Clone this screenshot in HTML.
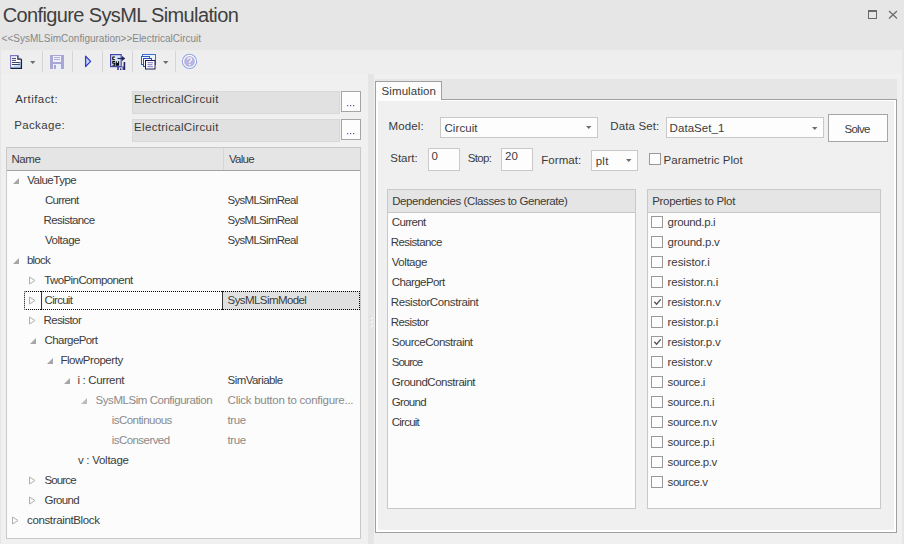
<!DOCTYPE html>
<html><head><meta charset="utf-8">
<style>
html,body{margin:0;padding:0;}
body{width:904px;height:544px;position:relative;overflow:hidden;background:#e6e6e6;font-family:"Liberation Sans",sans-serif;}
.a{position:absolute;white-space:pre;line-height:1;}
</style></head><body>
<div style="position:absolute;left:0px;top:0px;width:904px;height:544px;background:#e6e6e6"></div>
<div style="position:absolute;left:1px;top:50px;width:901px;height:24px;background:#eeeeee"></div>
<div style="position:absolute;left:1px;top:74px;width:901px;height:470px;background:#f0f0f0"></div>
<div style="position:absolute;left:42px;top:51px;width:1px;height:21px;background:#d5d5d5"></div>
<div style="position:absolute;left:72px;top:51px;width:1px;height:21px;background:#d5d5d5"></div>
<div style="position:absolute;left:102px;top:51px;width:1px;height:21px;background:#d5d5d5"></div>
<div style="position:absolute;left:132px;top:51px;width:1px;height:21px;background:#d5d5d5"></div>
<div style="position:absolute;left:175px;top:51px;width:1px;height:21px;background:#d5d5d5"></div>
<div style="position:absolute;left:132px;top:91px;width:208px;height:23px;background:#e1e1e1;border:1px solid #d9d9d9;box-sizing:border-box"></div>
<div style="position:absolute;left:132px;top:119px;width:208px;height:23px;background:#e1e1e1;border:1px solid #d9d9d9;box-sizing:border-box"></div>
<div style="position:absolute;left:341px;top:91px;width:20px;height:21px;background:#fdfdfd;border:1px solid #a5a5a5;box-sizing:border-box"></div>
<div style="position:absolute;left:341px;top:119px;width:20px;height:21px;background:#fdfdfd;border:1px solid #a5a5a5;box-sizing:border-box"></div>
<div style="position:absolute;left:6px;top:147px;width:355px;height:392px;background:#fcfcfc;border:1px solid #c9c9c9;box-sizing:border-box"></div>
<div style="position:absolute;left:7px;top:148px;width:353px;height:22px;background:#e5e5e5"></div>
<div style="position:absolute;left:7px;top:170px;width:353px;height:1px;background:#a3a3a3"></div>
<div style="position:absolute;left:223px;top:148px;width:1px;height:22px;background:#d6d6d6"></div>
<div style="position:absolute;left:368px;top:74px;width:6px;height:470px;background:#e5e5e5"></div>
<div style="position:absolute;left:375px;top:79px;width:522px;height:20px;background:#e6e6e6"></div>
<div style="position:absolute;left:375px;top:81px;width:67px;height:19px;background:#fcfcfc;border:1px solid #a0a0a0;border-bottom:none;box-sizing:border-box"></div>
<div style="position:absolute;left:375px;top:99px;width:522px;height:434px;background:#f0f0f0;border:1px solid #a0a0a0;box-sizing:border-box"></div>
<div style="position:absolute;left:376px;top:100px;width:520px;height:432px;border:2px solid #ffffff;border-top:1px solid #ffffff;box-sizing:border-box"></div>
<div style="position:absolute;left:376px;top:99px;width:65px;height:2px;background:#fcfcfc"></div>
<div style="position:absolute;left:440px;top:117px;width:158px;height:21px;background:#fdfdfd;border:1px solid #c9c9c9;box-sizing:border-box"></div>
<div style="position:absolute;left:666px;top:117px;width:158px;height:21px;background:#fdfdfd;border:1px solid #c9c9c9;box-sizing:border-box"></div>
<div style="position:absolute;left:828px;top:114px;width:60px;height:28px;background:#fdfdfd;border:1px solid #a5a5a5;box-sizing:border-box"></div>
<div style="position:absolute;left:428px;top:148px;width:32px;height:23px;background:#fdfdfd;border:1px solid #c9c9c9;box-sizing:border-box"></div>
<div style="position:absolute;left:501px;top:148px;width:32px;height:23px;background:#fdfdfd;border:1px solid #c9c9c9;box-sizing:border-box"></div>
<div style="position:absolute;left:591px;top:150px;width:47px;height:21px;background:#fdfdfd;border:1px solid #c9c9c9;box-sizing:border-box"></div>
<div style="position:absolute;left:649px;top:153px;width:12px;height:12px;background:#fdfdfd;border:1px solid #999999;box-sizing:border-box"></div>
<div style="position:absolute;left:387px;top:189px;width:249px;height:320px;background:#fcfcfc;border:1px solid #c9c9c9;box-sizing:border-box"></div>
<div style="position:absolute;left:388px;top:190px;width:247px;height:22px;background:#e5e5e5"></div>
<div style="position:absolute;left:388px;top:212px;width:247px;height:1px;background:#c6c6c6"></div>
<div style="position:absolute;left:647px;top:189px;width:234px;height:320px;background:#fcfcfc;border:1px solid #c9c9c9;box-sizing:border-box"></div>
<div style="position:absolute;left:648px;top:190px;width:232px;height:22px;background:#e5e5e5"></div>
<div style="position:absolute;left:648px;top:212px;width:232px;height:1px;background:#c6c6c6"></div>
<div style="position:absolute;left:651px;top:216px;width:12px;height:12px;background:#fdfdfd;border:1px solid #999999;box-sizing:border-box"></div>
<div style="position:absolute;left:651px;top:236px;width:12px;height:12px;background:#fdfdfd;border:1px solid #999999;box-sizing:border-box"></div>
<div style="position:absolute;left:651px;top:256px;width:12px;height:12px;background:#fdfdfd;border:1px solid #999999;box-sizing:border-box"></div>
<div style="position:absolute;left:651px;top:276px;width:12px;height:12px;background:#fdfdfd;border:1px solid #999999;box-sizing:border-box"></div>
<div style="position:absolute;left:651px;top:296px;width:12px;height:12px;background:#fdfdfd;border:1px solid #999999;box-sizing:border-box"></div>
<div style="position:absolute;left:651px;top:316px;width:12px;height:12px;background:#fdfdfd;border:1px solid #999999;box-sizing:border-box"></div>
<div style="position:absolute;left:651px;top:336px;width:12px;height:12px;background:#fdfdfd;border:1px solid #999999;box-sizing:border-box"></div>
<div style="position:absolute;left:651px;top:356px;width:12px;height:12px;background:#fdfdfd;border:1px solid #999999;box-sizing:border-box"></div>
<div style="position:absolute;left:651px;top:376px;width:12px;height:12px;background:#fdfdfd;border:1px solid #999999;box-sizing:border-box"></div>
<div style="position:absolute;left:651px;top:396px;width:12px;height:12px;background:#fdfdfd;border:1px solid #999999;box-sizing:border-box"></div>
<div style="position:absolute;left:651px;top:416px;width:12px;height:12px;background:#fdfdfd;border:1px solid #999999;box-sizing:border-box"></div>
<div style="position:absolute;left:651px;top:436px;width:12px;height:12px;background:#fdfdfd;border:1px solid #999999;box-sizing:border-box"></div>
<div style="position:absolute;left:651px;top:456px;width:12px;height:12px;background:#fdfdfd;border:1px solid #999999;box-sizing:border-box"></div>
<div style="position:absolute;left:651px;top:476px;width:12px;height:12px;background:#fdfdfd;border:1px solid #999999;box-sizing:border-box"></div>
<div style="position:absolute;left:41px;top:291px;width:182px;height:19px;background:#fcfcfc;border-top:1px dotted #000;border-bottom:1px dotted #000;border-left:1px solid #333;box-sizing:border-box;border-radius:2px 0 0 2px"></div>
<div style="position:absolute;left:24px;top:291px;width:18px;height:19px;border:1px dotted #000;border-right:none;box-sizing:border-box;border-radius:2px 0 0 2px"></div>
<div style="position:absolute;left:222px;top:291px;width:138px;height:19px;background:#e0e0e0;border-top:1px dotted #000;border-bottom:1px dotted #000;border-right:1px dotted #000;border-left:1px solid #333;box-sizing:border-box"></div>
<svg style="position:absolute;left:0;top:0" width="904" height="544"><polygon points="13,184 19,178 19,184" fill="#a6a6a6"/><polygon points="13,264 19,258 19,264" fill="#a6a6a6"/><polygon points="29.5,277 29.5,284 35.0,280.5" fill="none" stroke="#b0b0b0" stroke-width="1"/><polygon points="29.5,297 29.5,304 35.0,300.5" fill="none" stroke="#b0b0b0" stroke-width="1"/><polygon points="29.5,317 29.5,324 35.0,320.5" fill="none" stroke="#b0b0b0" stroke-width="1"/><polygon points="30,344 36,338 36,344" fill="#a6a6a6"/><polygon points="47,364 53,358 53,364" fill="#a6a6a6"/><polygon points="64,384 70,378 70,384" fill="#a6a6a6"/><polygon points="81,404 87,398 87,404" fill="#bcbcbc"/><polygon points="29.5,477 29.5,484 35.0,480.5" fill="none" stroke="#b0b0b0" stroke-width="1"/><polygon points="29.5,497 29.5,504 35.0,500.5" fill="none" stroke="#b0b0b0" stroke-width="1"/><polygon points="12.5,517 12.5,524 18.0,520.5" fill="none" stroke="#b0b0b0" stroke-width="1"/><rect x="868.5" y="10.5" width="8" height="8" fill="none" stroke="#6a6a6a" stroke-width="1"/><rect x="868" y="10" width="9" height="2" fill="#6a6a6a"/><path d="M889,11 L897,18.5 M897,11 L889,18.5" stroke="#6a6a6a" stroke-width="1.2"/><path d="M10.5,55.5 H17.8 L21.5,59.2 V68.5 H10.5 Z" fill="#ffffff"/><path d="M18,62 H21 V68 H11 V66.5 H14 V65.5 H18 Z" fill="#bcd8f4"/><path d="M10.6,68.5 V55.6 H17.8" fill="none" stroke="#7d72c4" stroke-width="1.1"/><path d="M17.8,55.6 L21.4,59.2" fill="none" stroke="#c8d4f0" stroke-width="1"/><path d="M21.4,59.2 V68.4 H10.6" fill="none" stroke="#1a1a42" stroke-width="1.3"/><path d="M17.9,55.8 V59 H21.2 Z" fill="#d6ecff"/><path d="M17.9,55.6 V59.1 H21.4" fill="none" stroke="#1a1a42" stroke-width="1.2"/><path d="M12,58.4 H16 M12,60.4 H16 M12,62.5 H19.8 M12,64.5 H19.8" stroke="#3e3e70" stroke-width="1"/><polygon points="30,61 35.5,61 32.75,64" fill="#6e6e6e"/><polygon points="163,61 168.5,61 165.75,64" fill="#6e6e6e"/><rect x="50" y="55" width="14" height="14" fill="#aaa7d6"/><rect x="53" y="56" width="8" height="6" fill="#f2f4fb"/><path d="M54,57.6 H60 M54,59.6 H60" stroke="#aaa7d6" stroke-width="1"/><rect x="53" y="64" width="8" height="5" fill="#e8f0fa"/><rect x="54" y="65" width="2" height="4" fill="#aaa7d6"/><polygon points="85.6,56.3 85.6,66.5 90.6,61.4" fill="#c5dcf5" stroke="#3a3ad0" stroke-width="1.3" stroke-linejoin="round"/><rect x="110.6" y="54.6" width="10.6" height="12" fill="#d2e6fa" stroke="#4646a6" stroke-width="1.2"/><rect x="112" y="56" width="4" height="5" fill="#f4f9ff"/><path d="M115.2,57 H112.8 V59.8 H115.2" fill="none" stroke="#000" stroke-width="1.1"/><path d="M115,61.5 H112.8 V63.3 H114.7 V65.3 H112.5 M116.3,61.2 V65.3 H118.6 V61.2 M117.45,63 V65.3" fill="none" stroke="#000" stroke-width="1.05"/><path d="M117.5,58.5 H123.2" stroke="#25255e" stroke-width="1.2"/><polygon points="122,56 125.3,58.5 122,61" fill="#25255e"/><rect x="117" y="66.5" width="7" height="3.5" fill="#5a5ab0"/><rect x="119" y="67.5" width="3.5" height="2.5" fill="#f2f2fa"/><rect x="120" y="68.5" width="1.4" height="1.5" fill="#25255e"/><rect x="123.6" y="62" width="1.6" height="8" fill="#25255e"/><rect x="142.5" y="54.5" width="13" height="10" fill="#eaf2fc" stroke="#3f6fd0" stroke-width="1"/><rect x="141.5" y="56.5" width="8" height="8" fill="#f4f8fe" stroke="#2c5cc8" stroke-width="1"/><rect x="143.5" y="58.5" width="8" height="8" fill="#f4f8fe" stroke="#2c50b8" stroke-width="1"/><rect x="145.5" y="60.5" width="9.5" height="8.5" fill="#ffffff" stroke="#1a1a50" stroke-width="1"/><path d="M147.5,62.7 H153 M147.5,64.7 H152.5 M147.5,66.7 H153" stroke="#7a70c0" stroke-width="1"/><circle cx="189.5" cy="61.4" r="7.1" fill="#ffffff" stroke="#8fa3e6" stroke-width="1.1"/><circle cx="189.5" cy="61.4" r="5.4" fill="#b9b5dd"/><path d="M187.6,59.6 Q187.6,57.7 189.6,57.7 Q191.5,57.7 191.5,59.5 Q191.5,60.6 189.6,61.5 V62.8" fill="none" stroke="#ffffff" stroke-width="1.15"/><rect x="189" y="63.9" width="1.3" height="1.3" fill="#fff"/><rect x="347" y="105" width="1.2" height="1.2" fill="#5a5a90"/><rect x="350" y="105" width="1.2" height="1.2" fill="#5a5a90"/><rect x="353" y="105" width="1.2" height="1.2" fill="#5a5a90"/><rect x="347" y="133" width="1.2" height="1.2" fill="#5a5a90"/><rect x="350" y="133" width="1.2" height="1.2" fill="#5a5a90"/><rect x="353" y="133" width="1.2" height="1.2" fill="#5a5a90"/><rect x="370.5" y="317" width="2" height="2" fill="#f8f8f8"/><rect x="370" y="316.5" width="1" height="1" fill="#c8c8c8"/><rect x="370.5" y="321" width="2" height="2" fill="#f8f8f8"/><rect x="370" y="320.5" width="1" height="1" fill="#c8c8c8"/><rect x="370.5" y="325" width="2" height="2" fill="#f8f8f8"/><rect x="370" y="324.5" width="1" height="1" fill="#c8c8c8"/><polygon points="586,126 591.5,126 588.75,129" fill="#6e6e6e"/><polygon points="812,127 817.5,127 814.75,130" fill="#6e6e6e"/><polygon points="626,159 631.5,159 628.75,162" fill="#6e6e6e"/><polyline points="654.3,301.7 656.6,304.3 660.7,299.4" fill="none" stroke="#555" stroke-width="1.4"/><polyline points="654.3,341.7 656.6,344.3 660.7,339.4" fill="none" stroke="#555" stroke-width="1.4"/></svg>
<div class="a" style="left:2.70px;top:5.00px;font-size:20px;color:#3f3f3f;letter-spacing:-0.620px">Configure SysML Simulation</div>
<div class="a" style="left:1.60px;top:34.00px;font-size:10px;color:#868686;letter-spacing:0.000px">&lt;&lt;SysMLSimConfiguration&gt;&gt;ElectricalCircuit</div>
<div class="a" style="left:15.20px;top:94.00px;font-size:11.5px;color:#3b3b3b;letter-spacing:0.438px">Artifact:</div>
<div class="a" style="left:14.20px;top:120.00px;font-size:11.5px;color:#3b3b3b;letter-spacing:0.371px">Package:</div>
<div class="a" style="left:134.10px;top:94.00px;font-size:11.5px;color:#3b3b3b;letter-spacing:0.312px">ElectricalCircuit</div>
<div class="a" style="left:134.10px;top:122.00px;font-size:11.5px;color:#3b3b3b;letter-spacing:0.312px">ElectricalCircuit</div>
<div class="a" style="left:11.50px;top:154.00px;font-size:11.5px;color:#3b3b3b;letter-spacing:-0.467px">Name</div>
<div class="a" style="left:229.00px;top:154.00px;font-size:11.5px;color:#3b3b3b;letter-spacing:-0.750px">Value</div>
<div class="a" style="left:27.20px;top:175.00px;font-size:11.5px;color:#3b3b3b;letter-spacing:-0.500px">ValueType</div>
<div class="a" style="left:44.90px;top:195.00px;font-size:11.5px;color:#3b3b3b;letter-spacing:-0.667px">Current</div>
<div class="a" style="left:227.60px;top:195.00px;font-size:11.5px;color:#3b3b3b;letter-spacing:-0.727px">SysMLSimReal</div>
<div class="a" style="left:43.60px;top:215.00px;font-size:11.5px;color:#3b3b3b;letter-spacing:-0.589px">Resistance</div>
<div class="a" style="left:227.60px;top:215.00px;font-size:11.5px;color:#3b3b3b;letter-spacing:-0.727px">SysMLSimReal</div>
<div class="a" style="left:44.90px;top:235.00px;font-size:11.5px;color:#3b3b3b;letter-spacing:-0.467px">Voltage</div>
<div class="a" style="left:227.60px;top:235.00px;font-size:11.5px;color:#3b3b3b;letter-spacing:-0.727px">SysMLSimReal</div>
<div class="a" style="left:26.90px;top:255.00px;font-size:11.5px;color:#3b3b3b;letter-spacing:-0.750px">block</div>
<div class="a" style="left:44.20px;top:275.00px;font-size:11.5px;color:#3b3b3b;letter-spacing:-0.586px">TwoPinComponent</div>
<div class="a" style="left:44.60px;top:295.00px;font-size:11.5px;color:#3b3b3b;letter-spacing:-0.717px">Circuit</div>
<div class="a" style="left:227.60px;top:295.00px;font-size:11.5px;color:#3b3b3b;letter-spacing:-0.583px">SysMLSimModel</div>
<div class="a" style="left:43.60px;top:315.00px;font-size:11.5px;color:#3b3b3b;letter-spacing:-0.571px">Resistor</div>
<div class="a" style="left:44.60px;top:335.00px;font-size:11.5px;color:#3b3b3b;letter-spacing:-0.600px">ChargePort</div>
<div class="a" style="left:60.40px;top:355.00px;font-size:11.5px;color:#3b3b3b;letter-spacing:-0.455px">FlowProperty</div>
<div class="a" style="left:77.50px;top:375.00px;font-size:11.5px;color:#3b3b3b;letter-spacing:-0.360px">i : Current</div>
<div class="a" style="left:227.60px;top:375.00px;font-size:11.5px;color:#3b3b3b;letter-spacing:-0.550px">SimVariable</div>
<div class="a" style="left:95.60px;top:395.00px;font-size:11.5px;color:#8a8a8a;letter-spacing:-0.457px">SysMLSim Configuration</div>
<div class="a" style="left:227.60px;top:395.00px;font-size:11.5px;color:#8a8a8a;letter-spacing:-0.259px">Click button to configure...</div>
<div class="a" style="left:111.70px;top:415.00px;font-size:11.5px;color:#8a8a8a;letter-spacing:-0.527px">isContinuous</div>
<div class="a" style="left:227.60px;top:415.00px;font-size:11.5px;color:#8a8a8a;letter-spacing:-0.433px">true</div>
<div class="a" style="left:111.70px;top:435.00px;font-size:11.5px;color:#8a8a8a;letter-spacing:-0.550px">isConserved</div>
<div class="a" style="left:227.60px;top:435.00px;font-size:11.5px;color:#8a8a8a;letter-spacing:-0.433px">true</div>
<div class="a" style="left:77.90px;top:455.00px;font-size:11.5px;color:#3b3b3b;letter-spacing:-0.260px">v : Voltage</div>
<div class="a" style="left:44.60px;top:475.00px;font-size:11.5px;color:#3b3b3b;letter-spacing:-0.900px">Source</div>
<div class="a" style="left:44.60px;top:495.00px;font-size:11.5px;color:#3b3b3b;letter-spacing:-0.640px">Ground</div>
<div class="a" style="left:27.00px;top:515.00px;font-size:11.5px;color:#3b3b3b;letter-spacing:-0.357px">constraintBlock</div>
<div class="a" style="left:381.60px;top:86.00px;font-size:11.5px;color:#3b3b3b;letter-spacing:0.078px">Simulation</div>
<div class="a" style="left:388.50px;top:121.00px;font-size:11.5px;color:#3b3b3b;letter-spacing:0.140px">Model:</div>
<div class="a" style="left:444.50px;top:123.00px;font-size:11.5px;color:#3b3b3b;letter-spacing:0.067px">Circuit</div>
<div class="a" style="left:610.30px;top:121.00px;font-size:11.5px;color:#3b3b3b;letter-spacing:0.125px">Data Set:</div>
<div class="a" style="left:669.60px;top:123.00px;font-size:11.5px;color:#3b3b3b;letter-spacing:0.050px">DataSet_1</div>
<div class="a" style="left:844.40px;top:124.00px;font-size:11.5px;color:#3b3b3b;letter-spacing:-0.675px">Solve</div>
<div class="a" style="left:390.30px;top:153.00px;font-size:11.5px;color:#3b3b3b;letter-spacing:-0.020px">Start:</div>
<div class="a" style="left:431.60px;top:151.00px;font-size:11.5px;color:#3b3b3b;letter-spacing:0.000px">0</div>
<div class="a" style="left:467.70px;top:153.00px;font-size:11.5px;color:#3b3b3b;letter-spacing:-0.675px">Stop:</div>
<div class="a" style="left:505.00px;top:151.00px;font-size:11.5px;color:#3b3b3b;letter-spacing:0.000px">20</div>
<div class="a" style="left:541.30px;top:155.00px;font-size:11.5px;color:#3b3b3b;letter-spacing:0.050px">Format:</div>
<div class="a" style="left:595.70px;top:156.00px;font-size:11.5px;color:#3b3b3b;letter-spacing:0.250px">plt</div>
<div class="a" style="left:663.50px;top:155.00px;font-size:11.5px;color:#3b3b3b;letter-spacing:0.043px">Parametric Plot</div>
<div class="a" style="left:392.20px;top:196.00px;font-size:11.5px;color:#3b3b3b;letter-spacing:-0.409px">Dependencies (Classes to Generate)</div>
<div class="a" style="left:652.20px;top:196.00px;font-size:11.5px;color:#3b3b3b;letter-spacing:-0.294px">Properties to Plot</div>
<div class="a" style="left:391.80px;top:217.00px;font-size:11.5px;color:#3b3b3b;letter-spacing:-0.667px">Current</div>
<div class="a" style="left:390.80px;top:237.00px;font-size:11.5px;color:#3b3b3b;letter-spacing:-0.589px">Resistance</div>
<div class="a" style="left:391.80px;top:257.00px;font-size:11.5px;color:#3b3b3b;letter-spacing:-0.467px">Voltage</div>
<div class="a" style="left:391.80px;top:277.00px;font-size:11.5px;color:#3b3b3b;letter-spacing:-0.600px">ChargePort</div>
<div class="a" style="left:390.80px;top:297.00px;font-size:11.5px;color:#3b3b3b;letter-spacing:-0.388px">ResistorConstraint</div>
<div class="a" style="left:390.80px;top:317.00px;font-size:11.5px;color:#3b3b3b;letter-spacing:-0.571px">Resistor</div>
<div class="a" style="left:391.80px;top:337.00px;font-size:11.5px;color:#3b3b3b;letter-spacing:-0.507px">SourceConstraint</div>
<div class="a" style="left:391.80px;top:357.00px;font-size:11.5px;color:#3b3b3b;letter-spacing:-1.000px">Source</div>
<div class="a" style="left:391.80px;top:377.00px;font-size:11.5px;color:#3b3b3b;letter-spacing:-0.467px">GroundConstraint</div>
<div class="a" style="left:391.80px;top:397.00px;font-size:11.5px;color:#3b3b3b;letter-spacing:-0.700px">Ground</div>
<div class="a" style="left:391.80px;top:417.00px;font-size:11.5px;color:#3b3b3b;letter-spacing:-0.767px">Circuit</div>
<div class="a" style="left:667.60px;top:217.00px;font-size:11.5px;color:#3b3b3b;letter-spacing:-0.344px">ground.p.i</div>
<div class="a" style="left:667.60px;top:237.00px;font-size:11.5px;color:#3b3b3b;letter-spacing:-0.233px">ground.p.v</div>
<div class="a" style="left:667.60px;top:257.00px;font-size:11.5px;color:#3b3b3b;letter-spacing:-0.078px">resistor.i</div>
<div class="a" style="left:667.60px;top:277.00px;font-size:11.5px;color:#3b3b3b;letter-spacing:-0.164px">resistor.n.i</div>
<div class="a" style="left:667.60px;top:297.00px;font-size:11.5px;color:#3b3b3b;letter-spacing:-0.227px">resistor.n.v</div>
<div class="a" style="left:667.60px;top:317.00px;font-size:11.5px;color:#3b3b3b;letter-spacing:-0.164px">resistor.p.i</div>
<div class="a" style="left:667.60px;top:337.00px;font-size:11.5px;color:#3b3b3b;letter-spacing:-0.227px">resistor.p.v</div>
<div class="a" style="left:667.60px;top:357.00px;font-size:11.5px;color:#3b3b3b;letter-spacing:-0.156px">resistor.v</div>
<div class="a" style="left:667.60px;top:377.00px;font-size:11.5px;color:#3b3b3b;letter-spacing:-0.371px">source.i</div>
<div class="a" style="left:667.60px;top:397.00px;font-size:11.5px;color:#3b3b3b;letter-spacing:-0.333px">source.n.i</div>
<div class="a" style="left:667.60px;top:417.00px;font-size:11.5px;color:#3b3b3b;letter-spacing:-0.367px">source.n.v</div>
<div class="a" style="left:667.60px;top:437.00px;font-size:11.5px;color:#3b3b3b;letter-spacing:-0.333px">source.p.i</div>
<div class="a" style="left:667.60px;top:457.00px;font-size:11.5px;color:#3b3b3b;letter-spacing:-0.367px">source.p.v</div>
<div class="a" style="left:667.60px;top:477.00px;font-size:11.5px;color:#3b3b3b;letter-spacing:-0.443px">source.v</div>
</body></html>
